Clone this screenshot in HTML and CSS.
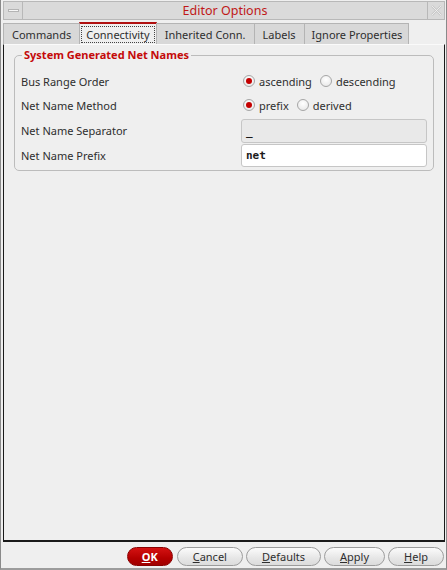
FILE: index.html
```html
<!DOCTYPE html>
<html>
<head>
<meta charset="utf-8">
<link rel="stylesheet" href="styles.css">
</head>
<body>
<div class="window">
  <div class="titlebar">
    <div class="tb-btn"><span class="dash"></span></div>
    <div class="title">Editor Options</div>
    <div class="tb-btn close">
      <svg width="15" height="15" viewBox="0 0 15 15"><path d="M3 3 L12 12 M12 3 L3 12" stroke="#c8c8c8" stroke-width="2.4" fill="none"/><path d="M3 3 L12 12 M12 3 L3 12" stroke="#f4f4f4" stroke-width="0.8" fill="none"/></svg>
    </div>
  </div>
  <div class="tabs">
    <div class="tab">Commands</div>
    <div class="tab active"><span class="focus">Connectivity</span></div>
    <div class="tab">Inherited Conn.</div>
    <div class="tab">Labels</div>
    <div class="tab last">Ignore Properties</div>
  </div>
  <div class="panel">
    <fieldset class="group">
      <legend>System Generated Net Names</legend>
      <div class="grid">
        <div class="label">Bus Range Order</div>
        <div class="ctrl">
          <span class="radio on"></span><span class="opt">ascending</span>
          <span class="radio"></span><span class="opt">descending</span>
        </div>
        <div class="label">Net Name Method</div>
        <div class="ctrl">
          <span class="radio on"></span><span class="opt">prefix</span>
          <span class="radio"></span><span class="opt">derived</span>
        </div>
        <div class="label">Net Name Separator</div>
        <div class="ctrl field-cell"><div class="field disabled">_</div></div>
        <div class="label">Net Name Prefix</div>
        <div class="ctrl field-cell"><div class="field short">net</div></div>
      </div>
    </fieldset>
  </div>
  <div class="buttons">
    <div class="btn ok"><u>O</u>K</div>
    <div class="btn"><u>C</u>ancel</div>
    <div class="btn"><u>D</u>efaults</div>
    <div class="btn"><u>A</u>pply</div>
    <div class="btn"><u>H</u>elp</div>
  </div>
</div>
</body>
</html>
```

FILE: styles.css
```css
* { box-sizing: border-box; }
html, body {
  margin: 0;
  padding: 0;
  background: #efefef;
}
body {
  font-family: "Noto Sans", "Open Sans", sans-serif;
  font-size: 11px;
  color: #2e2e2e;
}
.window {
  width: 447px;
  height: 570px;
  display: flex;
  flex-direction: column;
  border-left: 1px solid #8a8a8a;
  border-right: 1px solid #8a8a8a;
  border-bottom: 2px solid #9c9c9c;
  background: #efefef;
  padding: 1px 1px 0 2px;
}
.titlebar {
  height: 19px;
  display: flex;
  align-items: stretch;
  background: #dadada;
  border: 1px solid #b8b8b8;
}
.tb-btn {
  width: 19px;
  display: flex;
  align-items: center;
  justify-content: center;
  border-right: 1px solid #b8b8b8;
}
.tb-btn.close {
  width: 17px;
  border-right: none;
  border-left: 1px solid #b8b8b8;
}
.dash {
  width: 11px;
  height: 3px;
  background: #f6f6f6;
  border: 1px solid #b4b4b4;
}
.title {
  flex: 1;
  text-align: center;
  color: #c01818;
  font-size: 12.5px;
  line-height: 17px;
}
.tabs {
  display: flex;
  height: 23px;
  margin-top: 1px;
  align-items: flex-end;
  white-space: nowrap;
}
.tab {
  height: 21px;
  padding: 0 8px;
  display: flex;
  align-items: center;
  background: #d8d8d8;
  border: 1px solid #b4b4b4;
  border-bottom: none;
  margin-left: -1px;
  color: #2e2e2e;
}
.tab.last { padding: 0 6px 0 7px; }
.tab:first-child { margin-left: 0; }
.tab.active {
  height: 22px;
  background: #efefef;
  border-top: 2px solid #b01010;
  padding: 0 1px;
}
.focus {
  border: 1px dotted #444;
  padding: 0 4px;
  line-height: 15px;
}
.panel {
  flex: 1;
  border-left: 1px solid #1a1a1a;
  border-right: 1px solid #1a1a1a;
  border-bottom: 2px solid #1a1a1a;
  border-top: 1px solid #fafafa;
  padding: 2px 10px 0 10px;
}
.group {
  margin: 0;
  border: 1px solid #bcbcbc;
  border-radius: 5px;
  padding: 6px 6px 3px 6px;
  min-width: 0;
}
.group legend {
  color: #c40a0a;
  font-weight: bold;
  padding: 0 2px;
  margin-left: 1px;
  line-height: 16px;
}
.grid {
  display: grid;
  grid-template-columns: 1fr 186px;
  grid-template-rows: 24px 24px 26px 24px;
  white-space: nowrap;
}
.label {
  display: flex;
  align-items: center;
}
.ctrl {
  display: flex;
  align-items: center;
  padding-left: 2px;
}
.field-cell {
  align-items: flex-end;
  padding-left: 0;
}
.radio {
  width: 12px;
  height: 12px;
  border-radius: 50%;
  border: 1px solid #a6a6a6;
  background: radial-gradient(circle at 50% 35%, #ffffff 0%, #e4e4e4 100%);
  margin-right: 4px;
  position: relative;
  flex: none;
}
.radio.on::after {
  content: "";
  position: absolute;
  left: 2px;
  top: 2px;
  width: 6px;
  height: 6px;
  border-radius: 50%;
  background: #c40000;
}
.opt {
  margin-right: 8px;
}
.field {
  width: 186px;
  height: 24px;
  border: 1px solid #c6c6c6;
  border-radius: 3px;
  background: #ffffff;
  font-family: "DejaVu Sans Mono", monospace;
  font-weight: bold;
  font-size: 11px;
  padding: 5px 0 0 4px;
  color: #1a1a1a;
}
.field.short { height: 23px; padding-top: 4px; }
.field.disabled {
  background: #e9e9e9;
}
.buttons {
  height: 26px;
  display: flex;
  justify-content: flex-end;
  align-items: flex-start;
  gap: 3px;
  padding-top: 5px;
  padding-right: 1px;
}
.btn {
  height: 19px;
  padding: 0 15px;
  border: 1px solid #9c9c9c;
  border-radius: 10px;
  background: linear-gradient(#fbfbfb, #e6e6e6 60%, #dcdcdc);
  display: flex;
  align-items: center;
  color: #2e2e2e;
  line-height: 17px;
}
.btn.ok {
  background: linear-gradient(#d41212, #b50000 60%, #a00000);
  border-color: #8a0000;
  color: #ffffff;
  font-weight: bold;
  padding: 0 14px;
  margin-right: 1px;
}
```
